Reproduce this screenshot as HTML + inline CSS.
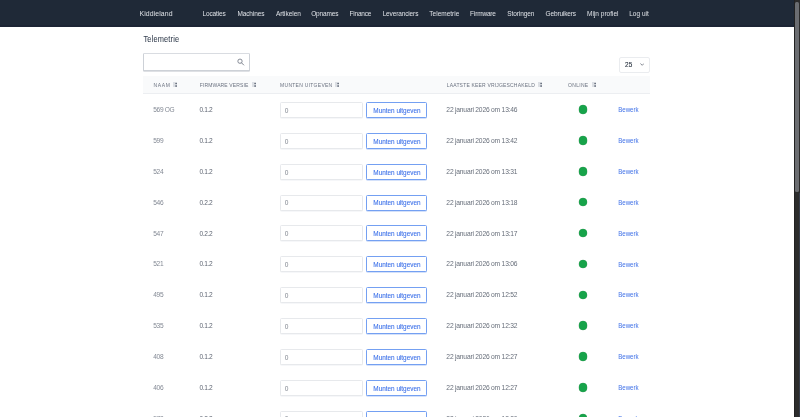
<!DOCTYPE html>
<html><head><meta charset="utf-8"><title>Telemetrie</title><style>
*{box-sizing:border-box;margin:0;padding:0}
html,body{width:800px;height:417px;overflow:hidden;background:#fff}
body{position:relative;font-family:"Liberation Sans",sans-serif;-webkit-font-smoothing:antialiased}
#wrap{position:absolute;left:0;top:0;width:800px;height:417px;will-change:transform}
.t{position:absolute;white-space:nowrap;line-height:1}
.a{position:absolute}
#nav{position:absolute;left:0;top:0;width:794.2px;height:26.8px;background:#1f2937;border-bottom:2.2px solid #1c2434}
#sb{position:absolute;left:794.2px;top:0;width:5.8px;height:417px;background:#2c2c2c}
#thumb{position:absolute;left:794.8px;top:2.0px;width:4.4px;height:190.4px;background:#6b6d71;border-radius:1.5px}
.search{position:absolute;left:143.1px;top:53.3px;width:107.4px;height:17.3px;border:0.9px solid #cdd1d7;border-top-color:#d9dce1;border-radius:1.2px;background:#fff;box-shadow:0 0.7px 0 #d3d6db}
.sel{position:absolute;left:619.4px;top:56.8px;width:30.6px;height:15.9px;border:0.6px solid #eaecef;border-radius:2px;background:#fff}
.thead{position:absolute;left:143.4px;top:75.7px;width:507px;height:18.4px;background:#f9fafb;border-bottom:0.7px solid #eceef1}
.inp{position:absolute;width:83.3px;height:16px;border:0.6px solid #e7e9ec;border-radius:1.5px;background:#fff;box-shadow:0 0.4px 0 #eef0f3}
.btn{position:absolute;width:60.5px;height:16px;border:0.75px solid #74a0f2;border-radius:1.5px;background:#fff;box-shadow:0 0.4px 0 #a9c3f5}
.dot{position:absolute;width:8.4px;height:8.4px;border-radius:50%;background:#17a34a;box-shadow:0 0 0 0.3px #7fa88c}
</style></head>
<body><div id="wrap">
<div id="nav"></div>
<div class="t" style="left:139.56px;top:10.60px;font-size:6.9px;letter-spacing:0.085px;color:#dfe2e6">Kiddieland</div>
<div class="t" style="left:202.51px;top:10.90px;font-size:6.5px;letter-spacing:-0.121px;color:#dfe2e7">Locaties</div>
<div class="t" style="left:237.40px;top:10.90px;font-size:6.5px;letter-spacing:-0.118px;color:#dfe2e7">Machines</div>
<div class="t" style="left:275.97px;top:10.90px;font-size:6.5px;letter-spacing:-0.051px;color:#dfe2e7">Artikelen</div>
<div class="t" style="left:311.14px;top:10.90px;font-size:6.5px;letter-spacing:-0.148px;color:#dfe2e7">Opnames</div>
<div class="t" style="left:349.54px;top:10.90px;font-size:6.5px;letter-spacing:-0.209px;color:#dfe2e7">Finance</div>
<div class="t" style="left:382.63px;top:10.90px;font-size:6.5px;letter-spacing:-0.132px;color:#dfe2e7">Leveranciers</div>
<div class="t" style="left:429.34px;top:10.90px;font-size:6.5px;letter-spacing:-0.002px;color:#dfe2e7">Telemetrie</div>
<div class="t" style="left:470.09px;top:10.90px;font-size:6.5px;letter-spacing:-0.168px;color:#dfe2e7">Firmware</div>
<div class="t" style="left:507.28px;top:10.90px;font-size:6.5px;letter-spacing:-0.082px;color:#dfe2e7">Storingen</div>
<div class="t" style="left:545.62px;top:10.90px;font-size:6.5px;letter-spacing:-0.159px;color:#dfe2e7">Gebruikers</div>
<div class="t" style="left:587.08px;top:10.90px;font-size:6.5px;letter-spacing:-0.004px;color:#dfe2e7">Mijn profiel</div>
<div class="t" style="left:629.24px;top:10.90px;font-size:6.5px;letter-spacing:0.005px;color:#dfe2e7">Log uit</div>
<div id="sb"></div><div id="thumb"></div><div class="a" style="left:799px;top:193px;width:1px;height:224px;background:#363c48"></div><div class="a" style="left:794.2px;top:0;width:0.9px;height:417px;background:#222"></div>
<div class="t" style="left:143.52px;top:35.50px;font-size:7.4px;letter-spacing:0.165px;color:#374151;-webkit-text-stroke:0.06px #374151;transform:scaleY(1.1);transform-origin:0 80%">Telemetrie</div>
<div class="search"></div>
<svg class="a" style="left:236px;top:57px" width="10" height="10" viewBox="0 0 10 10"><circle cx="4.0" cy="4.2" r="2.15" fill="none" stroke="#737985" stroke-width="0.85"/><path d="M5.6 5.9L7.7 8.0" stroke="#737985" stroke-width="0.9" stroke-linecap="round"/></svg>
<div class="sel"></div>
<div class="t" style="left:625.04px;top:62.30px;font-size:6.4px;letter-spacing:0.107px;color:#1f2937;-webkit-text-stroke:0.1px #1f2937">25</div>
<svg class="a" style="left:640px;top:63.2px" width="4.4" height="3" viewBox="0 0 4.4 3"><path d="M0.35 0.45L2.2 2.3L4.05 0.45" fill="none" stroke="#5b6270" stroke-width="0.75"/></svg>
<div class="thead"></div>
<div class="t" style="left:153.52px;top:82.60px;font-size:5.0px;letter-spacing:0.635px;color:#6b7280">NAAM</div>
<svg class="a" style="left:173.10px;top:82.0px" width="4.2" height="5" viewBox="0 0 4.2 5"><rect x="0" y="0" width="4.2" height="5" fill="#dcdfe4"/><rect x="2.3" y="0.9" width="1.9" height="1.2" fill="#6b7280"/><rect x="2.3" y="3.3" width="1.9" height="1.5" fill="#6b7280"/></svg>
<div class="t" style="left:199.83px;top:82.60px;font-size:5.0px;letter-spacing:0.117px;color:#6b7280">FIRMWARE VERSIE</div>
<svg class="a" style="left:252.00px;top:82.0px" width="4.2" height="5" viewBox="0 0 4.2 5"><rect x="0" y="0" width="4.2" height="5" fill="#dcdfe4"/><rect x="2.3" y="0.9" width="1.9" height="1.2" fill="#6b7280"/><rect x="2.3" y="3.3" width="1.9" height="1.5" fill="#6b7280"/></svg>
<div class="t" style="left:280.12px;top:82.60px;font-size:5.0px;letter-spacing:0.268px;color:#6b7280">MUNTEN UITGEVEN</div>
<svg class="a" style="left:334.90px;top:82.0px" width="4.2" height="5" viewBox="0 0 4.2 5"><rect x="0" y="0" width="4.2" height="5" fill="#dcdfe4"/><rect x="2.3" y="0.9" width="1.9" height="1.2" fill="#6b7280"/><rect x="2.3" y="3.3" width="1.9" height="1.5" fill="#6b7280"/></svg>
<div class="t" style="left:446.75px;top:82.60px;font-size:5.0px;letter-spacing:0.184px;color:#6b7280">LAATSTE KEER VRIJGESCHAKELD</div>
<svg class="a" style="left:538.10px;top:82.0px" width="4.2" height="5" viewBox="0 0 4.2 5"><rect x="0" y="0" width="4.2" height="5" fill="#dcdfe4"/><rect x="2.3" y="0.9" width="1.9" height="1.2" fill="#6b7280"/><rect x="2.3" y="3.3" width="1.9" height="1.5" fill="#6b7280"/></svg>
<div class="t" style="left:568.10px;top:82.60px;font-size:5.0px;letter-spacing:0.300px;color:#6b7280">ONLINE</div>
<svg class="a" style="left:591.75px;top:82.0px" width="4.2" height="5" viewBox="0 0 4.2 5"><rect x="0" y="0" width="4.2" height="5" fill="#dcdfe4"/><rect x="2.3" y="0.9" width="1.9" height="1.2" fill="#6b7280"/><rect x="2.3" y="3.3" width="1.9" height="1.5" fill="#6b7280"/></svg>
<div class="t" style="left:153.27px;top:107.10px;font-size:6.6px;letter-spacing:-0.336px;color:#838994">569 OG</div>
<div class="t" style="left:199.49px;top:107.10px;font-size:6.6px;letter-spacing:-0.348px;color:#5f6673">0.1.2</div>
<div class="inp" style="left:279.6px;top:102px"></div>
<div class="t" style="left:284.76px;top:107.80px;font-size:6.6px;letter-spacing:0.000px;color:#80868f">0</div>
<div class="btn" style="left:366.3px;top:102px"></div>
<div class="t" style="left:373.33px;top:107.90px;font-size:6.4px;letter-spacing:-0.005px;color:#3a6fe9;-webkit-text-stroke:0.08px #3a6fe9">Munten uitgeven</div>
<div class="t" style="left:446.37px;top:107.10px;font-size:6.7px;letter-spacing:-0.203px;color:#666d79">22 januari 2026 om 13:46</div>
<div class="dot" style="left:578.80px;top:105.40px"></div>
<div class="t" style="left:618.26px;top:107.30px;font-size:6.2px;letter-spacing:-0.082px;color:#4273e8;transform:scaleY(1.14);transform-origin:0 80%">Bewerk</div>
<div class="t" style="left:153.27px;top:137.96px;font-size:6.6px;letter-spacing:-0.336px;color:#838994">599</div>
<div class="t" style="left:199.49px;top:137.96px;font-size:6.6px;letter-spacing:-0.348px;color:#5f6673">0.1.2</div>
<div class="inp" style="left:279.6px;top:133px"></div>
<div class="t" style="left:284.76px;top:138.66px;font-size:6.6px;letter-spacing:0.000px;color:#80868f">0</div>
<div class="btn" style="left:366.3px;top:133px"></div>
<div class="t" style="left:373.33px;top:138.76px;font-size:6.4px;letter-spacing:-0.005px;color:#3a6fe9;-webkit-text-stroke:0.08px #3a6fe9">Munten uitgeven</div>
<div class="t" style="left:446.37px;top:137.96px;font-size:6.7px;letter-spacing:-0.203px;color:#666d79">22 januari 2026 om 13:42</div>
<div class="dot" style="left:578.80px;top:136.26px"></div>
<div class="t" style="left:618.26px;top:138.16px;font-size:6.2px;letter-spacing:-0.082px;color:#4273e8;transform:scaleY(1.14);transform-origin:0 80%">Bewerk</div>
<div class="t" style="left:153.27px;top:168.82px;font-size:6.6px;letter-spacing:-0.336px;color:#838994">524</div>
<div class="t" style="left:199.49px;top:168.82px;font-size:6.6px;letter-spacing:-0.348px;color:#5f6673">0.1.2</div>
<div class="inp" style="left:279.6px;top:164px"></div>
<div class="t" style="left:284.76px;top:169.52px;font-size:6.6px;letter-spacing:0.000px;color:#80868f">0</div>
<div class="btn" style="left:366.3px;top:164px"></div>
<div class="t" style="left:373.33px;top:169.62px;font-size:6.4px;letter-spacing:-0.005px;color:#3a6fe9;-webkit-text-stroke:0.08px #3a6fe9">Munten uitgeven</div>
<div class="t" style="left:446.37px;top:168.82px;font-size:6.7px;letter-spacing:-0.203px;color:#666d79">22 januari 2026 om 13:31</div>
<div class="dot" style="left:578.80px;top:167.12px"></div>
<div class="t" style="left:618.26px;top:169.02px;font-size:6.2px;letter-spacing:-0.082px;color:#4273e8;transform:scaleY(1.14);transform-origin:0 80%">Bewerk</div>
<div class="t" style="left:153.27px;top:199.68px;font-size:6.6px;letter-spacing:-0.336px;color:#838994">546</div>
<div class="t" style="left:199.49px;top:199.68px;font-size:6.6px;letter-spacing:-0.348px;color:#5f6673">0.2.2</div>
<div class="inp" style="left:279.6px;top:195px"></div>
<div class="t" style="left:284.76px;top:200.38px;font-size:6.6px;letter-spacing:0.000px;color:#80868f">0</div>
<div class="btn" style="left:366.3px;top:195px"></div>
<div class="t" style="left:373.33px;top:200.48px;font-size:6.4px;letter-spacing:-0.005px;color:#3a6fe9;-webkit-text-stroke:0.08px #3a6fe9">Munten uitgeven</div>
<div class="t" style="left:446.37px;top:199.68px;font-size:6.7px;letter-spacing:-0.203px;color:#666d79">22 januari 2026 om 13:18</div>
<div class="dot" style="left:578.80px;top:197.98px"></div>
<div class="t" style="left:618.26px;top:199.88px;font-size:6.2px;letter-spacing:-0.082px;color:#4273e8;transform:scaleY(1.14);transform-origin:0 80%">Bewerk</div>
<div class="t" style="left:153.27px;top:230.54px;font-size:6.6px;letter-spacing:-0.336px;color:#838994">547</div>
<div class="t" style="left:199.49px;top:230.54px;font-size:6.6px;letter-spacing:-0.348px;color:#5f6673">0.2.2</div>
<div class="inp" style="left:279.6px;top:225px"></div>
<div class="t" style="left:284.76px;top:231.24px;font-size:6.6px;letter-spacing:0.000px;color:#80868f">0</div>
<div class="btn" style="left:366.3px;top:225px"></div>
<div class="t" style="left:373.33px;top:231.34px;font-size:6.4px;letter-spacing:-0.005px;color:#3a6fe9;-webkit-text-stroke:0.08px #3a6fe9">Munten uitgeven</div>
<div class="t" style="left:446.37px;top:230.54px;font-size:6.7px;letter-spacing:-0.203px;color:#666d79">22 januari 2026 om 13:17</div>
<div class="dot" style="left:578.80px;top:228.84px"></div>
<div class="t" style="left:618.26px;top:230.74px;font-size:6.2px;letter-spacing:-0.082px;color:#4273e8;transform:scaleY(1.14);transform-origin:0 80%">Bewerk</div>
<div class="t" style="left:153.27px;top:261.40px;font-size:6.6px;letter-spacing:-0.336px;color:#838994">521</div>
<div class="t" style="left:199.49px;top:261.40px;font-size:6.6px;letter-spacing:-0.348px;color:#5f6673">0.1.2</div>
<div class="inp" style="left:279.6px;top:256px"></div>
<div class="t" style="left:284.76px;top:262.10px;font-size:6.6px;letter-spacing:0.000px;color:#80868f">0</div>
<div class="btn" style="left:366.3px;top:256px"></div>
<div class="t" style="left:373.33px;top:262.20px;font-size:6.4px;letter-spacing:-0.005px;color:#3a6fe9;-webkit-text-stroke:0.08px #3a6fe9">Munten uitgeven</div>
<div class="t" style="left:446.37px;top:261.40px;font-size:6.7px;letter-spacing:-0.203px;color:#666d79">22 januari 2026 om 13:06</div>
<div class="dot" style="left:578.80px;top:259.70px"></div>
<div class="t" style="left:618.26px;top:261.60px;font-size:6.2px;letter-spacing:-0.082px;color:#4273e8;transform:scaleY(1.14);transform-origin:0 80%">Bewerk</div>
<div class="t" style="left:153.27px;top:292.26px;font-size:6.6px;letter-spacing:-0.336px;color:#838994">495</div>
<div class="t" style="left:199.49px;top:292.26px;font-size:6.6px;letter-spacing:-0.348px;color:#5f6673">0.1.2</div>
<div class="inp" style="left:279.6px;top:287px"></div>
<div class="t" style="left:284.76px;top:292.96px;font-size:6.6px;letter-spacing:0.000px;color:#80868f">0</div>
<div class="btn" style="left:366.3px;top:287px"></div>
<div class="t" style="left:373.33px;top:293.06px;font-size:6.4px;letter-spacing:-0.005px;color:#3a6fe9;-webkit-text-stroke:0.08px #3a6fe9">Munten uitgeven</div>
<div class="t" style="left:446.37px;top:292.26px;font-size:6.7px;letter-spacing:-0.203px;color:#666d79">22 januari 2026 om 12:52</div>
<div class="dot" style="left:578.80px;top:290.56px"></div>
<div class="t" style="left:618.26px;top:292.46px;font-size:6.2px;letter-spacing:-0.082px;color:#4273e8;transform:scaleY(1.14);transform-origin:0 80%">Bewerk</div>
<div class="t" style="left:153.27px;top:323.12px;font-size:6.6px;letter-spacing:-0.336px;color:#838994">535</div>
<div class="t" style="left:199.49px;top:323.12px;font-size:6.6px;letter-spacing:-0.348px;color:#5f6673">0.1.2</div>
<div class="inp" style="left:279.6px;top:318px"></div>
<div class="t" style="left:284.76px;top:323.82px;font-size:6.6px;letter-spacing:0.000px;color:#80868f">0</div>
<div class="btn" style="left:366.3px;top:318px"></div>
<div class="t" style="left:373.33px;top:323.92px;font-size:6.4px;letter-spacing:-0.005px;color:#3a6fe9;-webkit-text-stroke:0.08px #3a6fe9">Munten uitgeven</div>
<div class="t" style="left:446.37px;top:323.12px;font-size:6.7px;letter-spacing:-0.203px;color:#666d79">22 januari 2026 om 12:32</div>
<div class="dot" style="left:578.80px;top:321.42px"></div>
<div class="t" style="left:618.26px;top:323.32px;font-size:6.2px;letter-spacing:-0.082px;color:#4273e8;transform:scaleY(1.14);transform-origin:0 80%">Bewerk</div>
<div class="t" style="left:153.27px;top:353.98px;font-size:6.6px;letter-spacing:-0.336px;color:#838994">408</div>
<div class="t" style="left:199.49px;top:353.98px;font-size:6.6px;letter-spacing:-0.348px;color:#5f6673">0.1.2</div>
<div class="inp" style="left:279.6px;top:349px"></div>
<div class="t" style="left:284.76px;top:354.68px;font-size:6.6px;letter-spacing:0.000px;color:#80868f">0</div>
<div class="btn" style="left:366.3px;top:349px"></div>
<div class="t" style="left:373.33px;top:354.78px;font-size:6.4px;letter-spacing:-0.005px;color:#3a6fe9;-webkit-text-stroke:0.08px #3a6fe9">Munten uitgeven</div>
<div class="t" style="left:446.37px;top:353.98px;font-size:6.7px;letter-spacing:-0.203px;color:#666d79">22 januari 2026 om 12:27</div>
<div class="dot" style="left:578.80px;top:352.28px"></div>
<div class="t" style="left:618.26px;top:354.18px;font-size:6.2px;letter-spacing:-0.082px;color:#4273e8;transform:scaleY(1.14);transform-origin:0 80%">Bewerk</div>
<div class="t" style="left:153.27px;top:384.84px;font-size:6.6px;letter-spacing:-0.336px;color:#838994">406</div>
<div class="t" style="left:199.49px;top:384.84px;font-size:6.6px;letter-spacing:-0.348px;color:#5f6673">0.1.2</div>
<div class="inp" style="left:279.6px;top:380px"></div>
<div class="t" style="left:284.76px;top:385.54px;font-size:6.6px;letter-spacing:0.000px;color:#80868f">0</div>
<div class="btn" style="left:366.3px;top:380px"></div>
<div class="t" style="left:373.33px;top:385.64px;font-size:6.4px;letter-spacing:-0.005px;color:#3a6fe9;-webkit-text-stroke:0.08px #3a6fe9">Munten uitgeven</div>
<div class="t" style="left:446.37px;top:384.84px;font-size:6.7px;letter-spacing:-0.203px;color:#666d79">22 januari 2026 om 12:27</div>
<div class="dot" style="left:578.80px;top:383.14px"></div>
<div class="t" style="left:618.26px;top:385.04px;font-size:6.2px;letter-spacing:-0.082px;color:#4273e8;transform:scaleY(1.14);transform-origin:0 80%">Bewerk</div>
<div class="t" style="left:153.27px;top:415.70px;font-size:6.6px;letter-spacing:-0.336px;color:#838994">573</div>
<div class="t" style="left:199.49px;top:415.70px;font-size:6.6px;letter-spacing:-0.348px;color:#5f6673">0.2.2</div>
<div class="inp" style="left:279.6px;top:411px"></div>
<div class="t" style="left:284.76px;top:416.40px;font-size:6.6px;letter-spacing:0.000px;color:#80868f">0</div>
<div class="btn" style="left:366.3px;top:411px"></div>
<div class="t" style="left:373.33px;top:416.50px;font-size:6.4px;letter-spacing:-0.005px;color:#3a6fe9;-webkit-text-stroke:0.08px #3a6fe9">Munten uitgeven</div>
<div class="t" style="left:446.37px;top:415.70px;font-size:6.7px;letter-spacing:-0.203px;color:#666d79">22 januari 2026 om 12:20</div>
<div class="dot" style="left:578.80px;top:414.00px"></div>
<div class="t" style="left:618.26px;top:415.90px;font-size:6.2px;letter-spacing:-0.082px;color:#4273e8;transform:scaleY(1.14);transform-origin:0 80%">Bewerk</div>
</div></body></html>
